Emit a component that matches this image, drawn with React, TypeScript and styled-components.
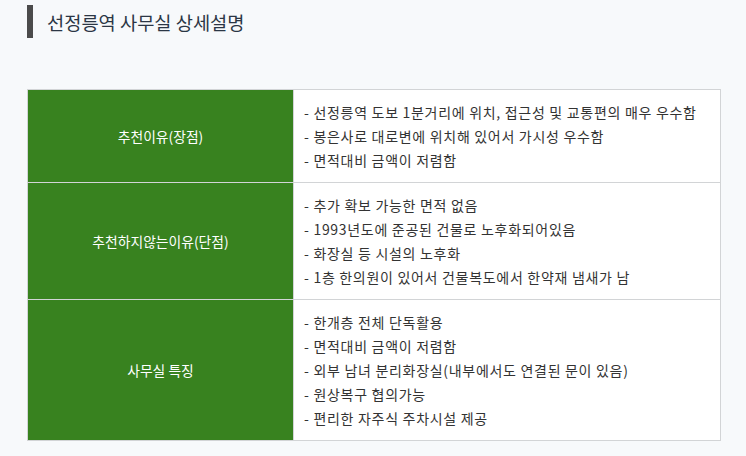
import React from "react";
import styled, { createGlobalStyle } from "styled-components";

const GlobalStyle = createGlobalStyle`
  html, body {
    margin: 0;
    padding: 0;
    background: #f7f9fb;
    font-family: "Noto Sans CJK KR", "Noto Sans", sans-serif;
  }
`;

const Page = styled.div`
  width: 746px;
  height: 456px;
  padding: 5px 0 0 27px;
  box-sizing: border-box;
  background: #f7f9fb;
`;

const Title = styled.h2`
  margin: 0;
  height: 33px;
  display: flex;
  align-items: center;
  border-left: 6px solid #4b4b4b;
  padding-left: 14px;
  font-size: 18.7px;
  font-weight: 400;
  color: #2b3645;
`;

const Table = styled.table`
  margin-top: 51px;
  width: 694px;
  border-collapse: collapse;
  background: #fff;
`;

const HeadCell = styled.th`
  width: 266px;
  box-sizing: border-box;
  background: #38821f;
  color: #fff;
  font-size: 13.8px;
  font-weight: 400;
  text-align: center;
  vertical-align: middle;
  border: 1px solid #d2d4d6;
`;

const BodyCell = styled.td`
  padding: 10px 10px;
  border: 1px solid #d2d4d6;
  vertical-align: middle;
`;

const Line = styled.div`
  font-size: 14px;
  letter-spacing: 0.7px;
  line-height: 24px;
  color: #333;
  white-space: nowrap;
`;

const rows = [
  {
    head: "추천이유(장점)",
    items: [
      "선정릉역 도보 1분거리에 위치, 접근성 및 교통편의 매우 우수함",
      "봉은사로 대로변에 위치해 있어서 가시성 우수함",
      "면적대비 금액이 저렴함",
    ],
  },
  {
    head: "추천하지않는이유(단점)",
    items: [
      "추가 확보 가능한 면적 없음",
      "1993년도에 준공된 건물로 노후화되어있음",
      "화장실 등 시설의 노후화",
      "1층 한의원이 있어서 건물복도에서 한약재 냄새가 남",
    ],
  },
  {
    head: "사무실 특징",
    items: [
      "한개층 전체 단독활용",
      "면적대비 금액이 저렴함",
      "외부 남녀 분리화장실(내부에서도 연결된 문이 있음)",
      "원상복구 협의가능",
      "편리한 자주식 주차시설 제공",
    ],
  },
];

const App = () => {
  return (
    <>
      <GlobalStyle />
      <Page>
        <Title>선정릉역 사무실 상세설명</Title>
        <Table>
          <tbody>
            {rows.map((row) => (
              <tr key={row.head}>
                <HeadCell>{row.head}</HeadCell>
                <BodyCell>
                  {row.items.map((item) => (
                    <Line key={item}>- {item}</Line>
                  ))}
                </BodyCell>
              </tr>
            ))}
          </tbody>
        </Table>
      </Page>
    </>
  );
};

export default App;
